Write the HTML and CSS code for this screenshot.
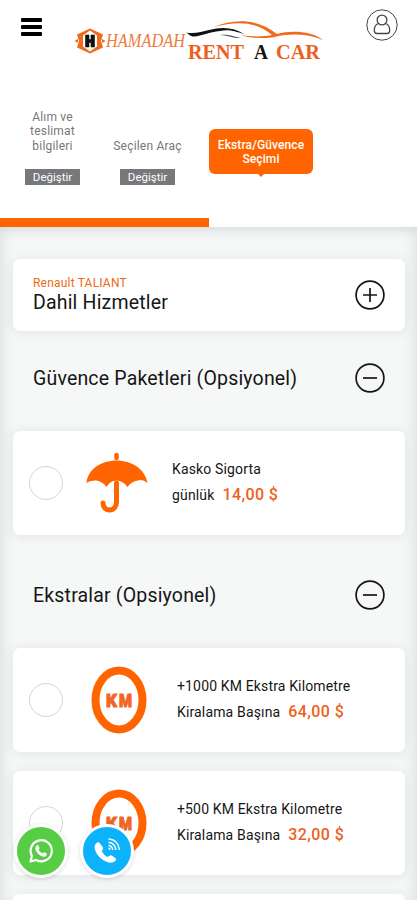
FILE: index.html
```html
<!DOCTYPE html>
<html lang="tr">
<head>
    <meta charset="UTF-8">
    <meta name="viewport" content="width=device-width, initial-scale=1.0">
    <title>Hamadah Rent A Car</title>
    <link rel="stylesheet" href="styles.css">
</head>
<body>
    <header class="header">
        <div class="topbar">
            <div class="menu"><span></span><span></span><span></span></div>
            <svg class="logo" width="252" height="48" viewBox="72 16 252 48">
                <path d="M89 28.500L76 34.500L78 41L76 47.500L89 53.500L102 47.500L100 41L102 34.500Z" fill="#f26a1b"/>
                <path d="M73.500 41L77 39V43ZM104.500 41L101 39V43Z" fill="#f26a1b"/>
                <path d="M89 30.500L82 35.500V46.500L89 51.500L96 46.500V35.500Z" fill="#fff"/>
                <path d="M84.500 35H88V39.500H90V35H93.500V47H90V42.500H88V47H84.500Z" fill="#111" stroke="#111" stroke-width=".6"/>
                <text class="logo-name" x="105" y="46.500" textLength="79" lengthAdjust="spacingAndGlyphs">HAMADAH</text>
                <path d="M185 32.500C193 34 201 32 208 30C222 26 234 28 243 34C233 31 228 29 219 31C208 32 201 36 193 36.500C189 36.500 188 34 185 32.500Z" fill="#111"/>
                <path d="M219 35C229 34 232 37 240 38C231 38.500 227 35 219 35Z" fill="#444"/>
                <path d="M213 27C233 19 255 18 276 34C290 30 311 31 322 40C307 34 290 33 274 37C264 39 250 38 240 35.500C251 36.500 262 37 271 35C255 21 235 21 213 27Z" fill="#f26a1b"/>
                <text class="logo-rent" x="187" y="59" textLength="56" lengthAdjust="spacingAndGlyphs">RENT</text>
                <text class="logo-rent dark" x="253" y="59" textLength="14" lengthAdjust="spacingAndGlyphs">A</text>
                <text class="logo-rent" x="275" y="59" textLength="44" lengthAdjust="spacingAndGlyphs">CAR</text>
            </svg>
            <svg class="user" width="32" height="32" viewBox="0 0 32 32" fill="none" stroke="#444">
                <circle cx="16" cy="16" r="15.200" stroke-width="1"/>
                <circle cx="16" cy="11" r="4.900" stroke-width="1.300"/>
                <path d="M12.500 14.500C9.500 15.500 8.300 18 8.300 21.500C8.300 23.500 9 24.500 11 24.500H21C23 24.500 23.700 23.500 23.700 21.500C23.700 18 22.500 15.500 19.500 14.500" stroke-width="1.300"/>
            </svg>
        </div>
        <div class="steps">
            <div class="step">
                <p>Alım ve<br>teslimat<br>bilgileri</p>
                <a class="change">Değiştir</a>
            </div>
            <div class="step">
                <p>Seçilen Araç</p>
                <a class="change">Değiştir</a>
            </div>
            <div class="step active">Ekstra/Güvence<br>Seçimi</div>
        </div>
        <div class="progress"></div>
    </header>

    <main class="content">
        <section class="card included">
            <div>
                <div class="car">Renault TALIANT</div>
                <h2>Dahil Hizmetler</h2>
            </div>
            <svg class="toggle" viewBox="0 0 30 30"><circle cx="15" cy="15" r="13.900"/><path d="M8 15H22M15 8V22"/></svg>
        </section>

        <div class="section-title">
            <h2>Güvence Paketleri (Opsiyonel)</h2>
            <svg class="toggle" viewBox="0 0 30 30"><circle cx="15" cy="15" r="13.900"/><path d="M8 15H22"/></svg>
        </div>

        <section class="card option">
            <span class="radio"></span>
            <svg class="umbrella" width="62" height="60" viewBox="0 0 62 60">
                <path d="M30.500 2V5" stroke="#ff6400" stroke-width="4.500" stroke-linecap="round"/>
                <path d="M.5 30C2 16 15 7.500 30.500 7.500S59 16 61.500 30Q57 26 52 27.500Q45 28.500 41.500 34Q37 27.500 30.500 27.500Q24 27.500 20.500 34Q16 28 10 27.500Q4 27 .5 30Z" fill="#ff6400"/>
                <path d="M30.500 28V49C30.500 59.500 17 59.500 17 50" fill="none" stroke="#fff" stroke-width="7"/>
                <path d="M30.500 30V49C30.500 59.500 17 59.500 17 50" fill="none" stroke="#ff6400" stroke-width="5" stroke-linecap="round"/>
            </svg>
            <div class="info">
                <p>Kasko Sigorta</p>
                <p><span>günlük</span><b>14,00 $</b></p>
            </div>
        </section>

        <div class="section-title">
            <h2>Ekstralar (Opsiyonel)</h2>
            <svg class="toggle" viewBox="0 0 30 30"><circle cx="15" cy="15" r="13.900"/><path d="M8 15H22"/></svg>
        </div>

        <section class="card option">
            <span class="radio"></span>
            <svg class="km" width="56" height="68" viewBox="0 0 56 68">
                <ellipse cx="28" cy="34" rx="23.500" ry="29.500"/>
                <text x="15" y="40.500" textLength="11" lengthAdjust="spacingAndGlyphs">K</text>
                <text x="28" y="40.500" textLength="13" lengthAdjust="spacingAndGlyphs">M</text>
            </svg>
            <div class="info">
                <p>+1000 KM Ekstra Kilometre</p>
                <p><span>Kiralama Başına</span><b>64,00 $</b></p>
            </div>
        </section>

        <section class="card option">
            <span class="radio"></span>
            <svg class="km" width="56" height="68" viewBox="0 0 56 68">
                <ellipse cx="28" cy="34" rx="23.500" ry="29.500"/>
                <text x="15" y="40.500" textLength="11" lengthAdjust="spacingAndGlyphs">K</text>
                <text x="28" y="40.500" textLength="13" lengthAdjust="spacingAndGlyphs">M</text>
            </svg>
            <div class="info">
                <p>+500 KM Ekstra Kilometre</p>
                <p><span>Kiralama Başına</span><b>32,00 $</b></p>
            </div>
        </section>

        <section class="card next"></section>
    </main>

    <div class="floating">
        <a class="round whatsapp">
            <svg width="26" height="26" viewBox="0 0 26 26">
                <path d="M2.500 23.500L4 18A10.600 10.600 0 1 1 8 22Z" fill="none" stroke="#fff" stroke-width="2.200" stroke-linejoin="round"/>
                <path d="M8.500 7.500Q10 6.500 10.700 8L11.500 10Q11.700 10.700 10.600 11.800Q12 14.500 14.700 15.600L16 14.300L18.700 15.600Q19.300 18 16.500 18.700C12.500 19 7.500 14 7.300 10.500Q7.300 8.500 8.500 7.500Z" fill="#fff"/>
            </svg>
        </a>
        <a class="round phone">
            <svg width="26" height="26" viewBox="0 0 26 26">
                <path d="M1.500 6Q4 3 6 5.500L9 9.500Q9.800 11 7.600 13Q9.500 17 13.500 19L16 17.500Q17 17 18.500 18L21.500 20.200Q23 21.500 21.300 23Q18 26 13 24Q4 20.500 1 12Q0 8 1.500 6Z" fill="#fff"/>
                <path d="M14.500 1Q24 1.500 25.500 12M14.500 4.200Q21 5 22 12M14.500 7.200Q18 8 19 12M14.500 10Q16 10.500 16 12" fill="none" stroke="#fff" stroke-width="1.400"/>
            </svg>
        </a>
    </div>
</body>
</html>
```

FILE: styles.css
```css
* {
    box-sizing: border-box;
}

body {
    margin: 0;
    height: 900px;
    overflow: hidden;
    background-color: #f6f7f7;
    font-family: Roboto, sans-serif;
    color: #161616;
}

h2, p {
    margin: 0;
}

.header {
    height: 227px;
    background-color: #fff;
    display: flex;
    flex-direction: column;
}

.topbar {
    height: 75px;
    padding: 9px 19px 0 21px;
    display: flex;
    justify-content: space-between;
    align-items: flex-start;
}

.menu {
    width: 21px;
    margin-top: 9px;
    display: flex;
    flex-direction: column;
    gap: 3px;
}

.menu span {
    height: 4px;
    background-color: #000;
    border-radius: 1px;
}

.logo {
    margin: 7px 11px 0 0;
}

.logo-name {
    font: italic 19px "Liberation Serif", serif;
    fill: #ee7a3c;
}

.logo-rent {
    font: bold 20.500px "Liberation Serif", serif;
    fill: #ec5f1c;
}

.logo-rent.dark {
    fill: #111;
}

.steps {
    height: 110px;
    margin-bottom: 33px;
    padding-left: 5px;
    display: flex;
    align-items: flex-end;
}

.step {
    width: 95px;
    display: flex;
    flex-direction: column;
    align-items: center;
    text-align: center;
    font-size: 12px;
    line-height: 14.300px;
    letter-spacing: 0.200px;
    color: #77787b;
}

.change {
    width: 55px;
    height: 16px;
    margin-top: 16px;
    background-color: #77787b;
    color: #fff;
    font-size: 11.500px;
    line-height: 16px;
    letter-spacing: 0;
}

.step.active {
    position: relative;
    width: 104px;
    height: 45px;
    margin: 0 0 11px 14px;
    padding-top: 9px;
    display: block;
    border-radius: 6px;
    background-color: #ff6400;
    color: #fff;
    font-weight: 500;
    letter-spacing: 0.100px;
}

.step.active::after {
    content: "";
    position: absolute;
    left: 48px;
    top: 44px;
    border: 4px solid transparent;
    border-top-color: #ff6400;
    border-bottom: 0;
}

.progress {
    width: 209px;
    height: 9px;
    background-color: #ff6400;
}

.content {
    height: 673px;
    padding: 32px 12px 0 13px;
    overflow: hidden;
    box-shadow: inset 0 10px 10px -6px #dadedf, inset 10px 0 12px -6px #e0e4e6, inset -10px 0 12px -6px #e0e4e6;
}

.card {
    border-radius: 7px;
    background-color: #fff;
    box-shadow: 0 1px 12px #dfe2e3;
}

.included {
    height: 72px;
    padding: 0 20px;
    display: flex;
    justify-content: space-between;
    align-items: center;
}

.car {
    margin-top: -1px;
    color: #ee6a17;
    font-size: 12px;
    line-height: 15px;
    letter-spacing: 0.200px;
}

h2 {
    font-size: 19.500px;
    line-height: 23px;
    font-weight: 400;
    letter-spacing: 0.180px;
}

.toggle {
    width: 30px;
    height: 30px;
    fill: none;
    stroke: #161616;
    stroke-width: 1.700;
}

.section-title {
    height: 100px;
    padding: 0 20px 6px;
    display: flex;
    justify-content: space-between;
    align-items: center;
}

.option {
    height: 104px;
    padding-left: 16px;
    display: flex;
    align-items: center;
}

.option + .card {
    margin-top: 19px;
}

.option + .section-title {
    height: 113px;
    padding-top: 13px;
}

.next {
    height: 6px;
    border-radius: 7px 7px 0 0;
}

.radio {
    width: 34px;
    height: 34px;
    border: 1px solid #d5d5d5;
    border-radius: 50%;
}

.umbrella {
    margin: 0 24px 0 23px;
}

.km {
    margin: 0 30px 0 28px;
}

.km ellipse {
    fill: none;
    stroke: #ff6400;
    stroke-width: 8;
}

.km text {
    font: 900 18px Roboto, sans-serif;
    fill: #f26522;
    stroke: #f26522;
    stroke-width: 1;
    stroke-linejoin: round;
}

.info {
    margin-top: -2px;
    font-size: 14px;
    line-height: 26px;
    letter-spacing: 0.150px;
    white-space: nowrap;
}

.info b {
    margin-left: 8px;
    font-size: 16px;
    font-weight: 500;
    letter-spacing: 0.400px;
    color: #ee6020;
}

.floating {
    position: fixed;
    left: 14px;
    top: 824px;
    display: flex;
    gap: 12px;
}

.round {
    width: 54px;
    height: 54px;
    border: 3px solid #fff;
    border-radius: 50%;
    display: flex;
    align-items: center;
    justify-content: center;
    box-shadow: 0 1px 4px rgba(0, 0, 0, 0.15);
}

.whatsapp {
    background-color: #57cd45;
}

.phone {
    background-color: #0cb2fb;
}
```
